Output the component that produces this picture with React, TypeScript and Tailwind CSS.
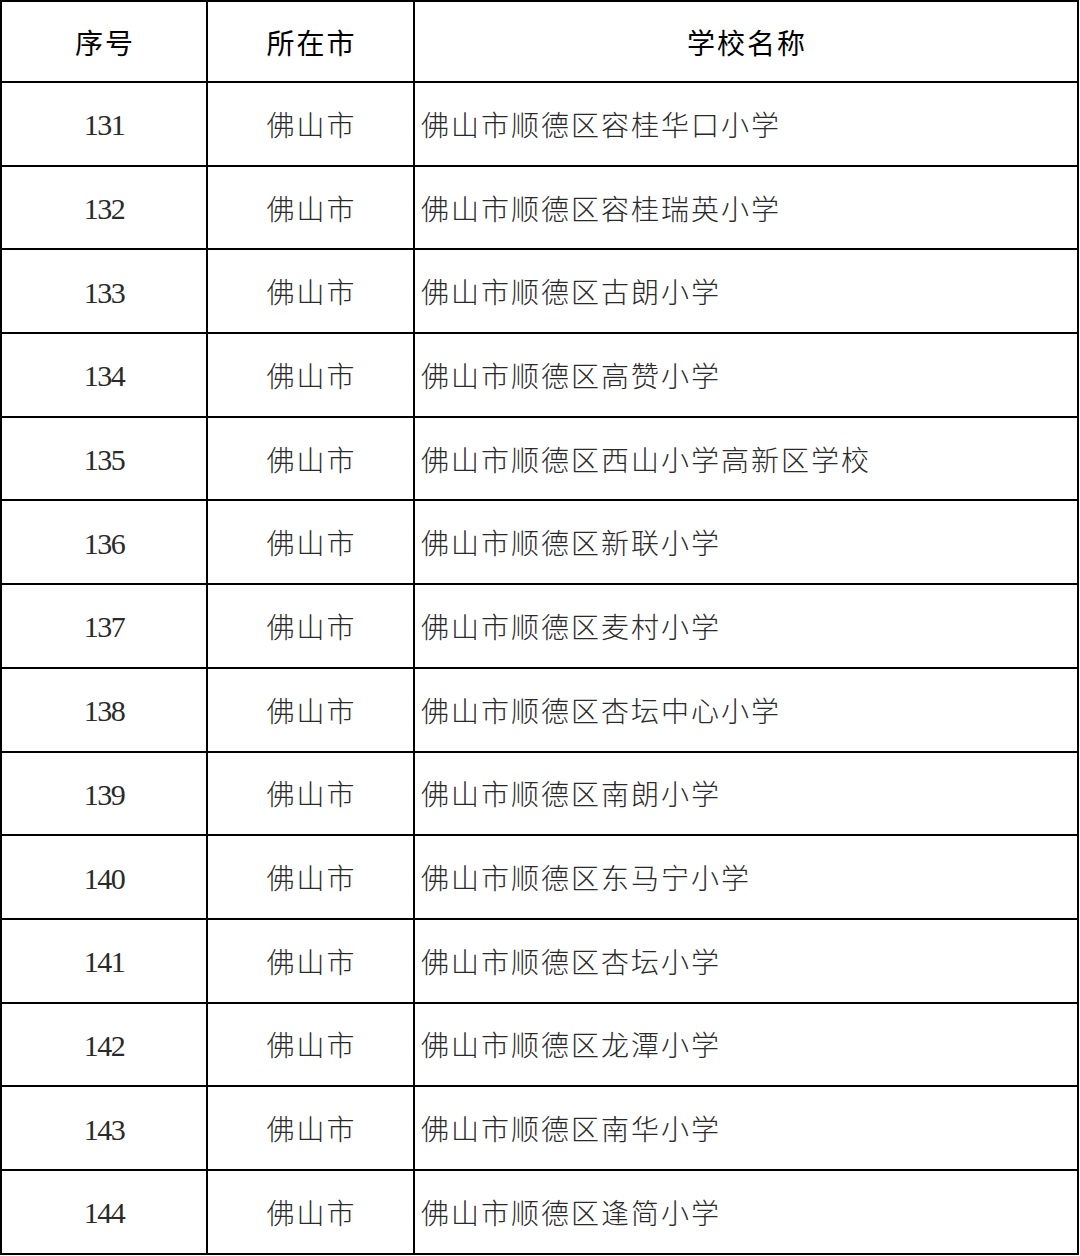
import React from "react";

const names = [
  "佛山市顺德区容桂华口小学",
  "佛山市顺德区容桂瑞英小学",
  "佛山市顺德区古朗小学",
  "佛山市顺德区高赞小学",
  "佛山市顺德区西山小学高新区学校",
  "佛山市顺德区新联小学",
  "佛山市顺德区麦村小学",
  "佛山市顺德区杏坛中心小学",
  "佛山市顺德区南朗小学",
  "佛山市顺德区东马宁小学",
  "佛山市顺德区杏坛小学",
  "佛山市顺德区龙潭小学",
  "佛山市顺德区南华小学",
  "佛山市顺德区逢简小学",
];

const cjk = { fontFamily: '"Noto Sans CJK SC", sans-serif' };
const num = { fontFamily: '"Liberation Serif", serif' };

export default function App() {
  return (
    <div className="w-[1080px] h-[1256px] bg-white overflow-hidden">
      <div className="w-[1079px] border-l-2 border-t-2 border-black">
        <div className="flex h-[81px] border-b-2 border-black text-black text-[28px] font-normal tracking-[2px]" style={cjk}>
          <div className="w-[206px] flex items-center justify-center border-r-2 border-black pl-[2px]">序号</div>
          <div className="w-[207px] flex items-center justify-center border-r-2 border-black pl-[2px]">所在市</div>
          <div className="flex-1 flex items-center justify-center border-r-2 border-black pl-[2px]">学校名称</div>
        </div>
        {names.map((n, i) => (
          <div key={i} className="flex h-[83.7px] border-b-2 border-black text-[#2a2a2a]">
            <div className="w-[206px] flex items-center justify-center border-r-2 border-black text-[30px] tracking-[-1.5px] pt-[2px]" style={num}>
              {131 + i}
            </div>
            <div className="w-[207px] flex items-center justify-center border-r-2 border-black text-[28px] font-light tracking-[2px] pl-[2px]" style={cjk}>
              佛山市
            </div>
            <div className="flex-1 flex items-center pl-[6px] border-r-2 border-black text-[28px] font-light tracking-[2px]" style={cjk}>
              {n}
            </div>
          </div>
        ))}
      </div>
    </div>
  );
}
